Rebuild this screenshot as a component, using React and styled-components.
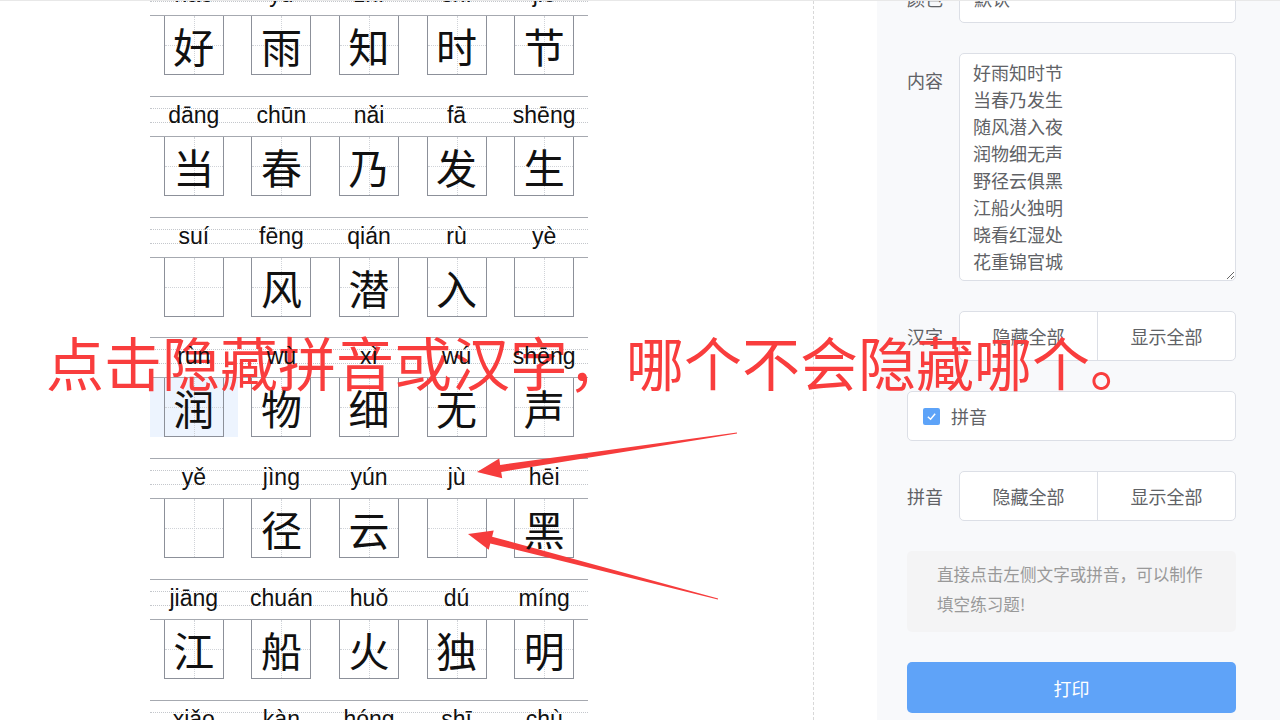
import React from 'react'
import styled, { createGlobalStyle } from 'styled-components'
import { ChevronDown } from 'lucide-react'

const GlobalStyle = createGlobalStyle`
  html, body {
    margin: 0;
    padding: 0;
    background: #fff;
  }
  body {
    font-family: "Noto Sans CJK SC", "Noto Sans", sans-serif;
  }
`

const poem = [
  { hz: '好雨知时节', py: ['hǎo', 'yǔ', 'zhī', 'shí', 'jié'] },
  { hz: '当春乃发生', py: ['dāng', 'chūn', 'nǎi', 'fā', 'shēng'] },
  { hz: '随风潜入夜', py: ['suí', 'fēng', 'qián', 'rù', 'yè'], hidden: [0, 4] },
  { hz: '润物细无声', py: ['rùn', 'wù', 'xì', 'wú', 'shēng'], active: 0 },
  { hz: '野径云俱黑', py: ['yě', 'jìng', 'yún', 'jù', 'hēi'], hidden: [0, 3] },
  { hz: '江船火独明', py: ['jiāng', 'chuán', 'huǒ', 'dú', 'míng'] },
  { hz: '晓看红湿处', py: ['xiǎo', 'kàn', 'hóng', 'shī', 'chù'] },
  { hz: '花重锦官城', py: ['huā', 'zhòng', 'jǐn', 'guān', 'chéng'] },
]

function App() {
  return (
    <Page>
      <GlobalStyle />
      <Workspace>
        <Sheet>
          {poem.map((line, i) => (
            <Line key={i}>
              <PinyinBand>
                {line.py.map((p, j) => (
                  <Pinyin key={j}>{p}</Pinyin>
                ))}
              </PinyinBand>
              <GridRow>
                {line.hz.split('').map((c, j) => (
                  <Cell key={j} $active={line.active === j}>
                    <Box>
                      <Hanzi>{line.hidden && line.hidden.includes(j) ? '' : c}</Hanzi>
                    </Box>
                  </Cell>
                ))}
              </GridRow>
            </Line>
          ))}
        </Sheet>
      </Workspace>

      <Panel>
        <Form>
          <FormItem>
            <Label>颜色</Label>
            <Select>
              <span>默认</span>
              <ChevronDown size={16} color="#c0c4cc" />
            </Select>
          </FormItem>
          <FormItem>
            <Label $top>内容</Label>
            <TextArea
              defaultValue={poem.map(l => l.hz).join('\n')}
              spellCheck={false}
            />
          </FormItem>
          <FormItem>
            <Label>汉字</Label>
            <ButtonGroup>
              <GroupButton>隐藏全部</GroupButton>
              <GroupButton>显示全部</GroupButton>
            </ButtonGroup>
          </FormItem>
          <CheckRow>
            <CheckMark>
              <svg width="11" height="11" viewBox="0 0 12 12">
                <polyline points="2,6.2 5,9 10,3" fill="none" stroke="#fff" strokeWidth="1.6" />
              </svg>
            </CheckMark>
            <CheckLabel>拼音</CheckLabel>
          </CheckRow>
          <FormItem>
            <Label>拼音</Label>
            <ButtonGroup>
              <GroupButton>隐藏全部</GroupButton>
              <GroupButton>显示全部</GroupButton>
            </ButtonGroup>
          </FormItem>
          <Tip>直接点击左侧文字或拼音，可以制作填空练习题!</Tip>
          <PrintButton>打印</PrintButton>
        </Form>
      </Panel>

      <Note>点击隐藏拼音或汉字，哪个不会隐藏哪个。</Note>
      <Arrows width="1280" height="720" viewBox="0 0 1280 720">
        <polygon
          points="736.9,431.5 500.2,463.9 499.2,457.5 477,471 502.2,477.3 501.2,470.9 737.1,432.5"
          fill="#f63c3c"
        />
        <polygon
          points="718.1,597.5 492.1,535.7 493.7,529.4 468,533 488.7,548.7 490.3,542.4 717.9,598.5"
          fill="#f63c3c"
        />
      </Arrows>
    </Page>
  )
}

const Page = styled.div`
  position: relative;
  display: flex;
  height: 720px;
  overflow: hidden;
  border-top: 1px solid #e8e8e8;
  box-sizing: border-box;
`

const Workspace = styled.div`
  width: 814px;
  flex-shrink: 0;
  box-sizing: border-box;
  padding-left: 150px;
  border-right: 1px dashed #d8d8d8;
`

const Sheet = styled.div`
  width: 438px;
  margin-top: -26px;
`

const Line = styled.div`
  margin-bottom: 20.8px;
`

const PinyinBand = styled.div`
  position: relative;
  display: flex;
  height: 40px;
  box-sizing: border-box;
  border-top: 1px solid #a6a9b0;
  &::before,
  &::after {
    content: '';
    position: absolute;
    left: 0;
    right: 0;
    border-top: 1px dotted #c4c7cc;
  }
  &::before {
    top: 11px;
  }
  &::after {
    top: 25px;
  }
`

const Pinyin = styled.div`
  position: relative;
  z-index: 1;
  flex: 1;
  text-align: center;
  font-family: "Liberation Sans", Arial, sans-serif;
  font-size: 23px;
  line-height: 36px;
  color: #111;
`

const GridRow = styled.div`
  display: flex;
  height: 60px;
  box-sizing: border-box;
  border-top: 1px solid #a6a9b0;
`

const Cell = styled.div`
  flex: 1;
  height: 59px;
  display: flex;
  justify-content: center;
  background: ${p => (p.$active ? '#edf4fe' : 'transparent')};
`

const Box = styled.div`
  position: relative;
  width: 60px;
  height: 59px;
  box-sizing: border-box;
  border: 1px solid #8c9099;
  border-top: 0;
  display: flex;
  align-items: center;
  justify-content: center;
  &::before {
    content: '';
    position: absolute;
    left: 50%;
    top: 0;
    bottom: 0;
    border-left: 1px dotted #d0d3d8;
  }
  &::after {
    content: '';
    position: absolute;
    top: 50%;
    left: 0;
    right: 0;
    border-top: 1px dotted #d0d3d8;
  }
`

const Hanzi = styled.span`
  position: relative;
  z-index: 1;
  font-family: "Noto Sans CJK SC", sans-serif;
  font-size: 41px;
  line-height: 58px;
  color: #111;
`

const Panel = styled.div`
  flex: 1;
  margin-left: 63px;
  background: #f8f9fb;
  padding: 0 44px 0 30px;
`

const Form = styled.div`
  display: flex;
  flex-direction: column;
  gap: 30px;
  margin-top: -28px;
`

const FormItem = styled.div`
  display: flex;
  align-items: flex-start;
`

const Label = styled.div`
  width: 52px;
  flex-shrink: 0;
  font-size: 18px;
  line-height: 50px;
  padding-top: ${p => (p.$top ? '2px' : '0')};
  color: #606266;
`

const Select = styled.div`
  flex: 1;
  height: 50px;
  box-sizing: border-box;
  border: 1px solid #dcdfe6;
  border-radius: 5px;
  background: #fff;
  padding: 0 16px 0 14px;
  display: flex;
  align-items: center;
  justify-content: space-between;
  font-size: 18px;
  color: #606266;
`

const TextArea = styled.textarea`
  flex: 1;
  height: 228px;
  box-sizing: border-box;
  border: 1px solid #dcdfe6;
  border-radius: 5px;
  background: #fff;
  padding: 5px 13px;
  font-family: "Noto Sans CJK SC", sans-serif;
  font-size: 18px;
  line-height: 27px;
  color: #606266;
  resize: vertical;
  overflow: hidden;
  outline: 0;
  margin: 0;
`

const ButtonGroup = styled.div`
  flex: 1;
  display: flex;
  height: 50px;
  box-sizing: border-box;
  border: 1px solid #dcdfe6;
  border-radius: 5px;
  background: #fff;
  overflow: hidden;
`

const GroupButton = styled.button`
  flex: 1;
  border: 0;
  background: transparent;
  font-family: "Noto Sans CJK SC", sans-serif;
  font-size: 18px;
  color: #606266;
  cursor: pointer;
  padding: 0;
  & + & {
    border-left: 1px solid #dcdfe6;
  }
`

const CheckRow = styled.label`
  display: flex;
  align-items: center;
  height: 50px;
  box-sizing: border-box;
  border: 1px solid #dcdfe6;
  border-radius: 5px;
  background: #fff;
  padding-left: 15px;
  cursor: pointer;
`

const CheckMark = styled.span`
  width: 17px;
  height: 17px;
  border-radius: 2px;
  background: #5da3f8;
  display: flex;
  align-items: center;
  justify-content: center;
`

const CheckLabel = styled.span`
  margin-left: 11px;
  font-size: 18px;
  color: #606266;
`

const Tip = styled.div`
  background: #f4f4f5;
  border-radius: 5px;
  padding: 8px 30px 13px;
  font-size: 16.6px;
  line-height: 30px;
  color: #999;
`

const PrintButton = styled.button`
  height: 51px;
  border: 0;
  border-radius: 5px;
  background: #5fa3f8;
  color: #fff;
  font-family: "Noto Sans CJK SC", sans-serif;
  font-size: 18px;
  cursor: pointer;
`

const Note = styled.div`
  position: absolute;
  left: 46px;
  top: 331px;
  font-family: "Noto Sans CJK SC", sans-serif;
  font-size: 58px;
  line-height: 58px;
  color: #f93d3d;
  white-space: nowrap;
  pointer-events: none;
`

const Arrows = styled.svg`
  position: absolute;
  left: 0;
  top: 0;
  pointer-events: none;
`

export default App
